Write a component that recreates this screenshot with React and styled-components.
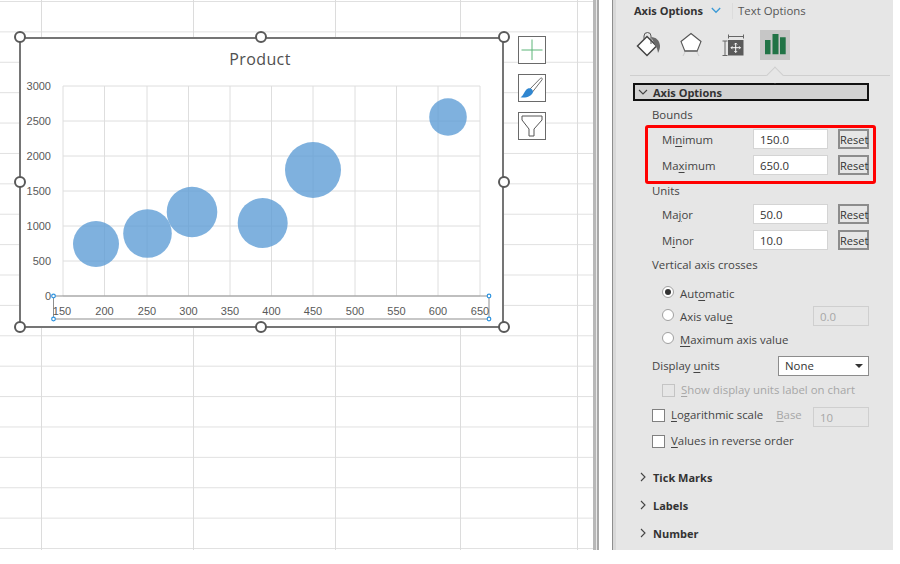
import React from "react";
import styled, { createGlobalStyle } from "styled-components";

const GlobalStyle = createGlobalStyle`
  html, body { margin: 0; padding: 0; background: #fff; }
  body { font-family: "Open Sans", "Noto Sans", "Liberation Sans", sans-serif; }
`;

const Page = styled.div`
  width: 900px;
  height: 564px;
  display: flex;
  align-items: flex-start;
  overflow: hidden;
  background: #fff;
`;

const Sheet = styled.div`
  position: relative;
  width: 593px;
  height: 550px;
  flex: none;
  background-color: #fff;
  background-image:
    linear-gradient(#dcdcdc, #dcdcdc), linear-gradient(#dcdcdc, #dcdcdc),
    linear-gradient(#dcdcdc, #dcdcdc), linear-gradient(#dcdcdc, #dcdcdc),
    linear-gradient(#dcdcdc, #dcdcdc),
    linear-gradient(#e0e0e0 1px, transparent 1px);
  background-size: 1px 100%, 1px 100%, 1px 100%, 1px 100%, 1px 100%, 100% 30.4px;
  background-position: 41px 0, 193px 0, 335px 0, 460px 0, 577px 0, 0 1px;
  background-repeat: no-repeat, no-repeat, no-repeat, no-repeat, no-repeat, repeat;
`;

const ChartFrame = styled.div`
  position: absolute;
  left: 19px;
  top: 37px;
  width: 485px;
  height: 291px;
  box-sizing: border-box;
  border: 2px solid #757575;
  background: #fff;
`;

const ChartSvg = styled.svg`
  display: block;
  width: 481px;
  height: 287px;
  text {
    font-family: "Liberation Sans", Arial, sans-serif;
    font-size: 11px;
    fill: #595959;
  }
  .title {
    font-family: "Open Sans", sans-serif;
    font-size: 16px;
    letter-spacing: 0.4px;
    fill: #505050;
  }
`;

const Handle = styled.span`
  position: absolute;
  left: ${(p) => p.$x}px;
  top: ${(p) => p.$y}px;
  width: 12px;
  height: 12px;
  box-sizing: border-box;
  margin: -6px 0 0 -6px;
  border: 2px solid #595959;
  border-radius: 50%;
  background: #fff;
`;

const ToolStack = styled.div`
  position: absolute;
  left: 518px;
  top: 36px;
  display: flex;
  flex-direction: column;
  gap: 10px;
`;

const ToolButton = styled.div`
  width: 28px;
  height: 28px;
  box-sizing: border-box;
  border: 1px solid #6a6a6a;
  background: #fff;
  svg { display: block; }
`;

const Splitter = styled.div`
  width: 19px;
  height: 550px;
  flex: none;
  background: linear-gradient(
    90deg,
    #b8b8b8 0 3px,
    #e8e8e8 3px 4px,
    #a8a8a8 4px 6px,
    #fff 6px
  );
`;

const Panel = styled.div`
  width: 281px;
  height: 550px;
  flex: none;
  box-sizing: border-box;
  border-left: 1px solid #8e8e8e;
  background: linear-gradient(90deg, #d8d8d8 0 3px, #e6e6e6 3px);
  color: #444;
  font-size: 11.4px;
  line-height: 1;
  padding-left: 3px;
`;

const PaneHead = styled.div`
  height: 21px;
  display: flex;
  align-items: center;
  padding-left: 18px;
`;

const PaneTab = styled.span`
  font-weight: ${(p) => (p.$on ? 700 : 400)};
  font-size: ${(p) => (p.$on ? 11 : 11.4)}px;
  color: ${(p) => (p.$on ? "#333" : "#555")};
  white-space: nowrap;
`;

const TabDivider = styled.span`
  width: 1px;
  height: 16px;
  margin: 0 5px 0 11px;
  background: #dcdcdc;
`;

const IconRow = styled.div`
  position: relative;
  height: 46px;
  margin: 9px 3px 0 14px;
  border-bottom: 1px solid #cfcfcf;
  box-sizing: border-box;
  display: flex;
  align-items: flex-start;
  &::after {
    content: "";
    position: absolute;
    left: 139px;
    bottom: -6px;
    width: 11px;
    height: 11px;
    border-top: 1px solid #cfcfcf;
    border-left: 1px solid #cfcfcf;
    background: #e6e6e6;
    transform: rotate(45deg);
  }
`;

const IconTab = styled.div`
  width: ${(p) => p.$w}px;
  height: 30px;
  margin-left: ${(p) => p.$ml}px;
  flex: none;
  background: ${(p) => (p.$on ? "#c6c6c6" : "transparent")};
  svg { display: block; }
`;

const SectionHead = styled.div`
  height: 18px;
  box-sizing: border-box;
  margin: 7px 24px 0 17px;
  border: 2px solid #111;
  background: #d2d2d2;
  display: flex;
  align-items: center;
  font-weight: 700;
  font-size: 11px;
  color: #333;
  svg { margin: 0 5px 0 3px; flex: none; }
`;

const Body = styled.div`
  padding: 0 24px 0 36px;
`;

const Caption = styled.div`
  height: ${(p) => p.$h || 20}px;
  margin-top: ${(p) => p.$mt || 0}px;
  display: flex;
  align-items: center;
  white-space: nowrap;
`;

const BoundsBox = styled.div`
  margin: 0 -7px;
  padding: 1px 4px 6px 14px;
  border: 3px solid #f00;
  border-radius: 3px;
  box-sizing: border-box;
  height: 59px;
  display: flex;
  flex-direction: column;
  gap: 6px;
`;

const UnitRows = styled.div`
  display: flex;
  flex-direction: column;
  gap: 6px;
  margin-top: 7px;
  padding-left: 10px;
`;

const ValueRow = styled.div`
  height: 20px;
  display: flex;
  align-items: center;
`;

const RowLabel = styled.span`
  width: 91px;
  flex: none;
  padding-top: 1px;
  white-space: nowrap;
`;

const Field = styled.div`
  width: ${(p) => p.$w || 75}px;
  height: 20px;
  flex: none;
  box-sizing: border-box;
  margin-top: ${(p) => p.$drop || 0}px;
  border: 1px solid ${(p) => (p.$off ? "#cfcfcf" : "#d4d4d4")};
  background: ${(p) => (p.$off ? "#e6e6e6" : "#fff")};
  color: ${(p) => (p.$off ? "#a6a6a6" : "#333")};
  display: flex;
  align-items: center;
  padding: 1px 0 0 6px;
`;

const ResetButton = styled.button`
  width: 31px;
  height: 20px;
  margin-left: 10px;
  padding: 1px 0 0;
  flex: none;
  box-sizing: border-box;
  border: 2px solid #8c8c8c;
  background: #e6e6e6;
  color: #333;
  font-family: inherit;
  font-size: 11px;
  line-height: 1;
`;

const RadioGroup = styled.div`
  display: flex;
  flex-direction: column;
  gap: 1px;
  margin-top: 7px;
  padding-left: 10px;
`;

const RadioRow = styled.div`
  height: 22px;
  display: flex;
  align-items: center;
  white-space: nowrap;
`;

const RadioText = styled.span`
  padding-top: 1px;
`;

const Radio = styled.span`
  position: relative;
  width: 12px;
  height: 12px;
  margin: -3px 6px 0 0;
  flex: none;
  box-sizing: border-box;
  border: 1px solid #a0a0a0;
  border-radius: 50%;
  background: #fff;
  &::after {
    content: "";
    display: ${(p) => (p.$on ? "block" : "none")};
    position: absolute;
    inset: 2px;
    border-radius: 50%;
    background: #333;
  }
`;

const Spacer = styled.span`
  flex: 1;
`;

const SelectBox = styled.div`
  width: 91px;
  height: 20px;
  flex: none;
  box-sizing: border-box;
  border: 1px solid #8c8c8c;
  background: #fff;
  color: #333;
  display: flex;
  align-items: center;
  justify-content: space-between;
  padding: 0 5px 0 6px;
  &::after {
    content: "";
    border-top: 4px solid #333;
    border-left: 4px solid transparent;
    border-right: 4px solid transparent;
  }
`;

const CheckRow = styled.div`
  height: 20px;
  margin-top: ${(p) => p.$mt}px;
  padding-left: ${(p) => p.$indent || 0}px;
  display: flex;
  align-items: center;
  white-space: nowrap;
  color: ${(p) => (p.$off ? "#a6a6a6" : "inherit")};
`;

const CheckBox = styled.span`
  width: 13px;
  height: 13px;
  margin-right: 6px;
  flex: none;
  box-sizing: border-box;
  border: 1px solid ${(p) => (p.$off ? "#c4c4c4" : "#808080")};
  background: ${(p) => (p.$off ? "#e6e6e6" : "#fff")};
`;

const BaseLabel = styled.span`
  margin-left: 13px;
  color: #a6a6a6;
`;

const Collapsed = styled.div`
  height: 28px;
  display: flex;
  align-items: center;
  margin-top: ${(p) => p.$mt || 0}px;
  padding-left: 22px;
  font-weight: 700;
  font-size: 11px;
  color: #333;
  svg { margin-right: 5px; flex: none; }
`;

const Key = styled.span`
  text-decoration: underline;
  text-underline-offset: 2px;
`;

const XLABELS = [150, 200, 250, 300, 350, 400, 450, 500, 550, 600, 650];
const XLINES = [63, 104.5, 147, 188.5, 230, 271.5, 313, 355, 396.5, 438, 480];
const YLABELS = [3000, 2500, 2000, 1500, 1000, 500, 0];
const YLINES = [86, 121, 156, 191, 226, 261, 296];
const BUBBLES = [
  [96, 244, 23],
  [147.5, 233.5, 24.3],
  [192, 212, 25.3],
  [262.7, 223, 25],
  [313, 170, 28],
  [448, 117, 18.8],
];

function Chart() {
  return (
    <ChartSvg viewBox="21 39 481 287">
      <text className="title" x="260" y="65" textAnchor="middle">Product</text>
      {XLINES.map((x) => (
        <line key={x} x1={x} x2={x} y1="86" y2="296" stroke="#dedede" strokeWidth="1" />
      ))}
      {YLINES.map((y) => (
        <line key={y} x1="63" x2="480" y1={y} y2={y} stroke="#dedede" strokeWidth="1" />
      ))}
      {YLABELS.map((v, i) => (
        <text key={v} x="51" y={YLINES[i] + 3.5} textAnchor="end">{v}</text>
      ))}
      {BUBBLES.map(([cx, cy, r]) => (
        <circle key={cx} cx={cx} cy={cy} r={r} fill="#5b9bd5" fillOpacity="0.78" />
      ))}
      <rect x="53.5" y="296" width="435.5" height="23" fill="none" stroke="#8f8f8f" strokeWidth="1" />
      {XLABELS.map((v, i) => (
        <text key={v} x={XLINES[i] - (i === 0 ? 1 : 0)} y="315" textAnchor="middle">{v}</text>
      ))}
      {[[53.5, 296], [489, 296], [53.5, 319], [489, 319]].map(([cx, cy]) => (
        <circle key={`${cx}-${cy}`} cx={cx} cy={cy} r="1.8" fill="#fff" stroke="#2e94e0" strokeWidth="1.2" />
      ))}
    </ChartSvg>
  );
}

const Chevron = ({ open }) => (
  <svg width="10" height="10" viewBox="0 0 10 10">
    <path
      d={open ? "M1 3l4 4 4-4" : "M3 1l4 4-4 4"}
      fill="none"
      stroke="#444"
      strokeWidth="1.1"
    />
  </svg>
);

export default function App() {
  return (
    <Page>
      <GlobalStyle />
      <Sheet>
        <ChartFrame>
          <Chart />
          <Handle $x={-1} $y={-2} />
          <Handle $x={240} $y={-2} />
          <Handle $x={483} $y={-2} />
          <Handle $x={-1} $y={143} />
          <Handle $x={483} $y={143} />
          <Handle $x={-1} $y={288} />
          <Handle $x={240} $y={288} />
          <Handle $x={483} $y={288} />
        </ChartFrame>
        <ToolStack>
          <ToolButton>
            <svg width="26" height="26" viewBox="0 0 26 26">
              <path d="M13 2.500v20.500M2.500 13h21" stroke="#5cb578" strokeWidth="1" fill="none" />
            </svg>
          </ToolButton>
          <ToolButton>
            <svg width="26" height="26" viewBox="0 0 26 26">
              <path d="M10.500 14.500L21.500 3.200c1-.8 2.300.3 1.600 1.500L13.500 17z" fill="#fff" stroke="#6f6f6f" strokeWidth="1" />
              <path d="M9 13.500c2.500-1 5 1 5 3.500-1 4-7 6.500-12.500 5.300 3.500-1.500 3.500-7 7.500-8.800z" fill="#2f86d0" />
            </svg>
          </ToolButton>
          <ToolButton>
            <svg width="26" height="26" viewBox="0 0 26 26">
              <path d="M3 3h20v4l-8 9v7h-5v-7L3 7z" fill="#fff" stroke="#555" strokeWidth="1" />
            </svg>
          </ToolButton>
        </ToolStack>
      </Sheet>
      <Splitter />
      <Panel>
        <PaneHead>
          <PaneTab $on>Axis Options</PaneTab>
          <svg width="10" height="7" viewBox="0 0 10 7" style={{ marginLeft: 8 }}>
            <path d="M.8 1L5 5.300 9.200 1" fill="none" stroke="#3c9ad6" strokeWidth="1.3" />
          </svg>
          <TabDivider />
          <PaneTab>Text Options</PaneTab>
        </PaneHead>
        <IconRow>
          <IconTab $w={26} $ml={6}>
            <svg width="26" height="30" viewBox="0 0 26 30">
              <path d="M11 6.500l9.500 9.500-9.500 9.500L1.500 16z" fill="#fff" stroke="#444" strokeWidth="1.5" />
              <path d="M8 10V6a3.500 3.500 0 0 1 7 0v8" fill="none" stroke="#555" strokeWidth="1" />
              <path d="M15 7c5 0 8.500 3.500 9 8.500.2 2-.5 5-2 7.500-.3-3-1-5-2.500-7z" fill="#6a6a6a" />
            </svg>
          </IconTab>
          <IconTab $w={24} $ml={17}>
            <svg width="24" height="30" viewBox="0 0 24 30">
              <path d="M12 3.500l10 8-3.800 9.500H5.800L2 11.500z" fill="#fff" stroke="#555" strokeWidth="1.100" />
              <path d="M5.500 21h13" stroke="#777" strokeWidth="1.800" />
              <path d="M6 22l-2 4M18 22l2 4" stroke="#ccc" strokeWidth="1" />
            </svg>
          </IconTab>
          <IconTab $w={26} $ml={19}>
            <svg width="26" height="30" viewBox="0 0 26 30">
              <path d="M6.500 6.500h15M6.500 4.500v4M21.500 4.500v4M.5 11h5M.5 25.500h5M3 11v14.500" fill="none" stroke="#666" strokeWidth="1" />
              <rect x="6" y="10" width="15.500" height="15.500" fill="#5a5a5a" />
              <path d="M13.700 13v9.500M9 17.700h9.500" stroke="#fff" strokeWidth="1" />
              <path d="M12.200 14.500l1.500-1.500 1.500 1.500M12.200 21l1.500 1.500 1.500-1.500M10.500 16.200L9 17.700l1.500 1.500M17 16.200l1.500 1.500-1.500 1.500" fill="none" stroke="#fff" strokeWidth="0.8" />
            </svg>
          </IconTab>
          <IconTab $w={30} $ml={12} $on>
            <svg width="30" height="30" viewBox="0 0 30 30">
              <path d="M5 10h5.500v14.300H5zM12.500 4h6v20.300h-6zM20 7.300h5.700v17H20z" fill="#217346" />
            </svg>
          </IconTab>
        </IconRow>
        <SectionHead>
          <Chevron open />
          Axis Options
        </SectionHead>
        <Body>
          <Caption $mt={4}>Bounds</Caption>
          <BoundsBox>
            <ValueRow>
              <RowLabel>Mi<Key>n</Key>imum</RowLabel>
              <Field>150.0</Field>
              <ResetButton>Reset</ResetButton>
            </ValueRow>
            <ValueRow>
              <RowLabel>Ma<Key>x</Key>imum</RowLabel>
              <Field>650.0</Field>
              <ResetButton>Reset</ResetButton>
            </ValueRow>
          </BoundsBox>
          <Caption $h={13}>Units</Caption>
          <UnitRows>
            <ValueRow>
              <RowLabel>Ma<Key>j</Key>or</RowLabel>
              <Field>50.0</Field>
              <ResetButton>Reset</ResetButton>
            </ValueRow>
            <ValueRow>
              <RowLabel>M<Key>i</Key>nor</RowLabel>
              <Field>10.0</Field>
              <ResetButton>Reset</ResetButton>
            </ValueRow>
          </UnitRows>
          <Caption $mt={5}>Vertical axis crosses</Caption>
          <RadioGroup>
            <RadioRow>
              <Radio $on />
              <RadioText>Aut<Key>o</Key>matic</RadioText>
            </RadioRow>
            <RadioRow>
              <Radio />
              <RadioText>Axis valu<Key>e</Key></RadioText>
              <Spacer />
              <Field $w={56} $off>0.0</Field>
            </RadioRow>
            <RadioRow>
              <Radio />
              <RadioText><Key>M</Key>aximum axis value</RadioText>
            </RadioRow>
          </RadioGroup>
          <Caption $mt={6}>
            <span>Display <Key>u</Key>nits</span>
            <Spacer />
            <SelectBox>None</SelectBox>
          </Caption>
          <CheckRow $mt={4} $indent={10} $off>
            <CheckBox $off />
            <span><Key>S</Key>how display units label on chart</span>
          </CheckRow>
          <CheckRow $mt={5}>
            <CheckBox />
            <span><Key>L</Key>ogarithmic scale</span>
            <BaseLabel><Key>B</Key>ase</BaseLabel>
            <Spacer />
            <Field $w={56} $off $drop={4}>10</Field>
          </CheckRow>
          <CheckRow $mt={6}>
            <CheckBox />
            <span><Key>V</Key>alues in reverse order</span>
          </CheckRow>
        </Body>
        <Collapsed $mt={12}><Chevron />Tick Marks</Collapsed>
        <Collapsed><Chevron />Labels</Collapsed>
        <Collapsed><Chevron />Number</Collapsed>
      </Panel>
    </Page>
  );
}
